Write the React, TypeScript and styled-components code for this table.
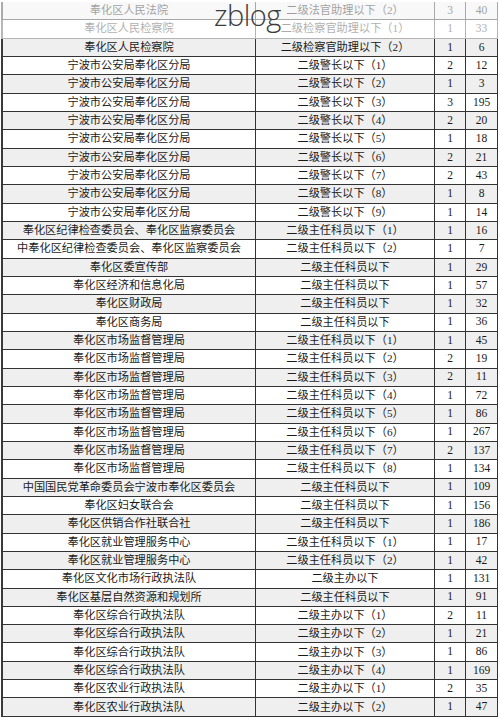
import styled, { createGlobalStyle } from "styled-components"

const GlobalStyle = createGlobalStyle`
    html, body {
        margin: 0;
        padding: 0;
        background: #ffffff;
    }
`

type Row = [string, string, string, string]

const rows: Row[] = [
    ["奉化区人民法院", "二级法官助理以下（2）", "3", "40"],
    ["奉化区人民检察院", "二级检察官助理以下（1）", "1", "33"],
    ["奉化区人民检察院", "二级检察官助理以下（2）", "1", "6"],
    ["宁波市公安局奉化区分局", "二级警长以下（1）", "2", "12"],
    ["宁波市公安局奉化区分局", "二级警长以下（2）", "1", "3"],
    ["宁波市公安局奉化区分局", "二级警长以下（3）", "3", "195"],
    ["宁波市公安局奉化区分局", "二级警长以下（4）", "2", "20"],
    ["宁波市公安局奉化区分局", "二级警长以下（5）", "1", "18"],
    ["宁波市公安局奉化区分局", "二级警长以下（6）", "2", "21"],
    ["宁波市公安局奉化区分局", "二级警长以下（7）", "2", "43"],
    ["宁波市公安局奉化区分局", "二级警长以下（8）", "1", "8"],
    ["宁波市公安局奉化区分局", "二级警长以下（9）", "1", "14"],
    ["奉化区纪律检查委员会、奉化区监察委员会", "二级主任科员以下（1）", "1", "16"],
    ["中奉化区纪律检查委员会、奉化区监察委员会", "二级主任科员以下（2）", "1", "7"],
    ["奉化区委宣传部", "二级主任科员以下", "1", "29"],
    ["奉化区经济和信息化局", "二级主任科员以下", "1", "57"],
    ["奉化区财政局", "二级主任科员以下", "1", "32"],
    ["奉化区商务局", "二级主任科员以下", "1", "36"],
    ["奉化区市场监督管理局", "二级主任科员以下（1）", "1", "45"],
    ["奉化区市场监督管理局", "二级主任科员以下（2）", "2", "19"],
    ["奉化区市场监督管理局", "二级主任科员以下（3）", "2", "11"],
    ["奉化区市场监督管理局", "二级主任科员以下（4）", "1", "72"],
    ["奉化区市场监督管理局", "二级主任科员以下（5）", "1", "86"],
    ["奉化区市场监督管理局", "二级主任科员以下（6）", "1", "267"],
    ["奉化区市场监督管理局", "二级主任科员以下（7）", "2", "137"],
    ["奉化区市场监督管理局", "二级主任科员以下（8）", "1", "134"],
    ["中国国民党革命委员会宁波市奉化区委员会", "二级主任科员以下", "1", "109"],
    ["奉化区妇女联合会", "二级主任科员以下", "1", "156"],
    ["奉化区供销合作社联合社", "二级主任科员以下", "1", "186"],
    ["奉化区就业管理服务中心", "二级主任科员以下（1）", "1", "17"],
    ["奉化区就业管理服务中心", "二级主任科员以下（2）", "1", "42"],
    ["奉化区文化市场行政执法队", "二级主办以下", "1", "131"],
    ["奉化区基层自然资源和规划所", "二级主任科员以下", "1", "91"],
    ["奉化区综合行政执法队", "二级主办以下（1）", "2", "11"],
    ["奉化区综合行政执法队", "二级主办以下（2）", "1", "21"],
    ["奉化区综合行政执法队", "二级主办以下（3）", "1", "86"],
    ["奉化区综合行政执法队", "二级主办以下（4）", "1", "169"],
    ["奉化区农业行政执法队", "二级主办以下（1）", "2", "35"],
    ["奉化区农业行政执法队", "二级主办以下（2）", "1", "47"],
]

// top rows of the photo are washed out
const fadeFor = (i: number) => (i === 0 ? 0.42 : i === 1 ? 0.36 : 1)

const Page = styled.div`
    position: relative;
    width: 500px;
    height: 719px;
    overflow: hidden;
    padding-top: 2px;
    box-sizing: border-box;
`

const Table = styled.div`
    display: flex;
    flex-direction: column;
    margin-left: 1px;
    width: 497px;
`

const TableRow = styled.div<{ $shaded: boolean; $fade: number }>`
    display: grid;
    grid-template-columns: 253px 179px 31px 32px;
    height: 18.34px;
    box-sizing: border-box;
    border-left: 2px solid #3a3a3a;
    border-bottom: 1px solid #333;
    background: ${p => (p.$shaded ? "#efefef" : "#ffffff")};
    opacity: ${p => p.$fade};
    color: #1a1a1a;
`

const Cell = styled.div<{ $num?: boolean }>`
    display: flex;
    align-items: center;
    justify-content: center;
    border-right: 1px solid #333;
    white-space: nowrap;
    overflow: hidden;
    font-family: "Liberation Serif", "Noto Sans CJK SC", serif;
    font-size: ${p => (p.$num ? "11.5px" : "11.2px")};
    line-height: 1;
`

const Watermark = styled.div`
    position: absolute;
    left: 214px;
    top: 0;
    font-family: "Open Sans", "Liberation Sans", sans-serif;
    font-weight: 300;
    font-size: 29px;
    line-height: 1;
    color: #3c3c3c;
    letter-spacing: -0.5px;
`

export default function App() {
    return (
        <Page>
            <GlobalStyle />
            <Table>
                {rows.map((r, i) => (
                    <TableRow key={i} $shaded={i % 2 === 0} $fade={fadeFor(i)}>
                        <Cell>{r[0]}</Cell>
                        <Cell>{r[1]}</Cell>
                        <Cell $num>{r[2]}</Cell>
                        <Cell $num>{r[3]}</Cell>
                    </TableRow>
                ))}
            </Table>
            <Watermark>zblog</Watermark>
        </Page>
    )
}
